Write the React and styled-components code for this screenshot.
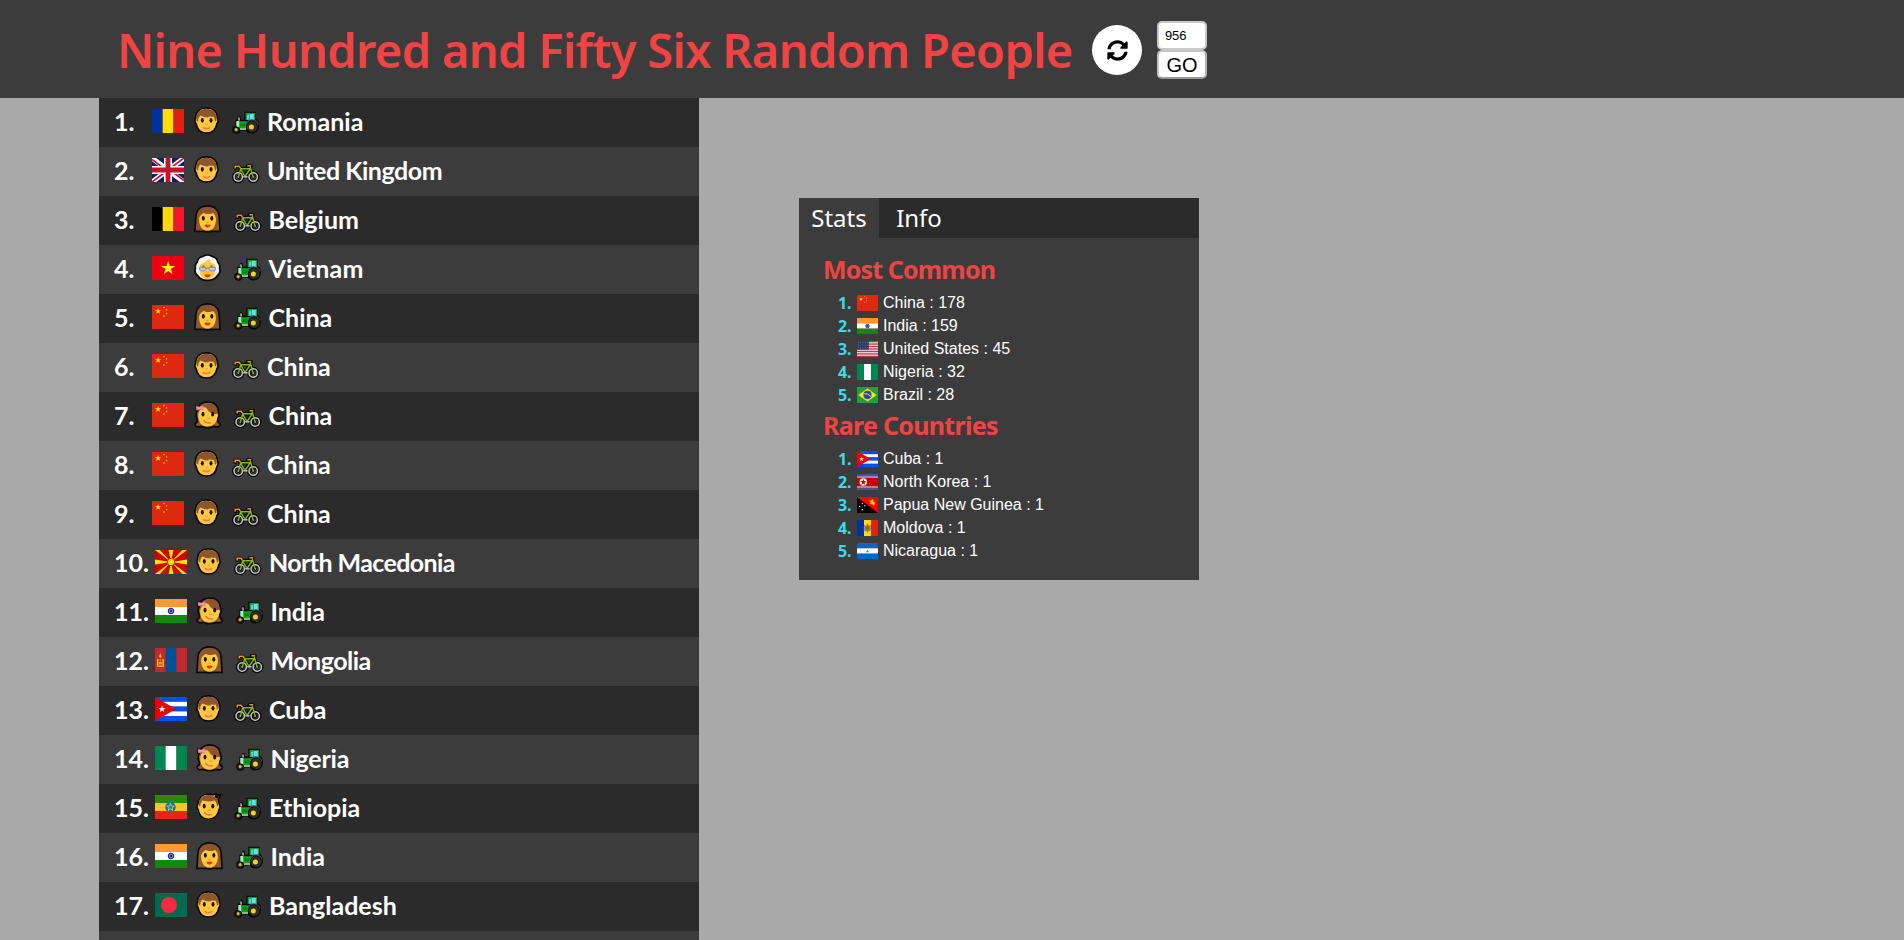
import React from "react";
import styled, { createGlobalStyle } from "styled-components";
import { FaSyncAlt } from "react-icons/fa";

const GlobalStyle = createGlobalStyle`
  * { box-sizing: border-box; }
  html, body { margin: 0; padding: 0; height: 100%; overflow: hidden; }
  body { background: #a9a9a9; font-family: "Liberation Sans", Arial, sans-serif; }
`;

const Page = styled.div`
  height: 940px;
  overflow: hidden;
`;

const Header = styled.header`
  display: flex;
  align-items: center;
  height: 98px;
  padding: 2px 0 0 117px;
  background: #3c3c3c;
`;

const Title = styled.h1`
  width: 975px;
  margin: 0;
  color: #f04444;
  font: 600 47px/60px "Noto Sans", sans-serif;
  letter-spacing: -0.68px;
  white-space: nowrap;
`;

const RefreshButton = styled.button`
  display: flex;
  align-items: center;
  justify-content: center;
  width: 50px;
  height: 50px;
  padding: 0;
  border: 0;
  border-radius: 50%;
  background: #fff;
  color: #000;
  font-size: 21px;
`;

const CountForm = styled.form`
  display: flex;
  flex-direction: column;
  width: 50px;
  margin-left: 15px;
`;

const CountInput = styled.input`
  width: 50px;
  height: 29px;
  padding: 0 6px;
  border: 2px solid #c8c8c8;
  border-radius: 5px;
  background: #fff;
  color: #000;
  font: 13px "Liberation Sans", Arial, sans-serif;
  letter-spacing: -0.15px;
`;

const GoButton = styled.button`
  width: 50px;
  height: 29px;
  padding: 0;
  border: 2px solid #c4c4c4;
  border-bottom-color: #999;
  border-right-color: #b4b4b4;
  border-radius: 5px;
  background: #fff;
  color: #000;
  font: 20px/24px "Liberation Sans", Arial, sans-serif;
`;

const Main = styled.main`
  display: flex;
  align-items: flex-start;
  padding-left: 99px;
`;

const PeopleList = styled.ol`
  width: 600px;
  margin: 0;
  padding: 0;
  list-style: none;
`;

const PersonRow = styled.li`
  display: flex;
  align-items: flex-start;
  height: 49px;
  padding-left: 15px;
  background: #3c3c3c;
  color: #fff;
  font: 700 25px/46px Lato, sans-serif;

  &:nth-child(odd) { background: #2b2b2b; }
`;

const RowNumber = styled.span`
  flex: none;
  width: ${(p) => (p.$wide ? "41px" : "38px")};
`;

const FlagSvg = styled.svg`
  display: block;
  flex: none;
  width: ${(p) => (p.$small ? "21px" : "32px")};
  height: ${(p) => (p.$small ? "16px" : "24px")};
`;

const RowFlag = styled.span`
  flex: none;
  width: ${(p) => (p.$wide ? "41px" : "42px")};
  padding-top: 11px;
`;

const FaceSvg = styled.svg`
  display: block;
  flex: none;
  width: 28px;
  height: 28px;
  margin: 9px ${(p) => (p.$broad ? "11.5px" : "10px")} 0 0;
`;

const VehicleSvg = styled.svg`
  display: block;
  flex: none;
  width: 28px;
  height: 28px;
  margin: 9px 7px 0 0;
`;

const CountryName = styled.span`
  margin-left: ${(p) => p.$nudge || 0}px;
  letter-spacing: ${(p) => p.$tracking || 0}px;
  white-space: nowrap;
`;

const StatsPanel = styled.section`
  width: 400px;
  height: 382px;
  margin: 100px 0 0 100px;
  background: #3c3c3c;
`;

const TabBar = styled.nav`
  display: flex;
  height: 40px;
  background: #2b2b2b;
`;

const Tab = styled.button`
  width: 80px;
  height: 40px;
  padding: 0;
  border: 0;
  background: ${(p) => (p.$active ? "#3c3c3c" : "transparent")};
  color: #fff;
  font: 400 24px/40px "Noto Sans", sans-serif;
`;

const PanelBody = styled.div`
  padding: 13px 25px 0 24px;
`;

const SectionTitle = styled.h2`
  margin: 0;
  height: 41px;
  color: #f04444;
  font: 700 25px/36px "Noto Sans", sans-serif;
  letter-spacing: ${(p) => p.$tracking}px;
`;

const StatList = styled.ol`
  margin: 0;
  padding: 0 0 0 15px;
  list-style: none;
`;

const StatItem = styled.li`
  display: flex;
  align-items: flex-start;
  height: 23px;
  padding-top: 3px;
  color: #fff;
  font-size: 16px;
  line-height: 16px;
`;

const StatNumber = styled.span`
  width: 19px;
  color: #3ddbe8;
  font: 700 16px/16px "Noto Sans", sans-serif;
  letter-spacing: -0.2px;
`;

const StatText = styled.span`
  margin-left: 5px;
`;

const starPoints = (cx, cy, r, turn = 0) =>
  Array.from({ length: 10 }, (_, i) => {
    const a = ((i * 36 - 90 + turn) * Math.PI) / 180;
    const d = i % 2 ? r * 0.382 : r;
    return `${(cx + d * Math.cos(a)).toFixed(2)},${(cy + d * Math.sin(a)).toFixed(2)}`;
  }).join(" ");

const Star = ({ x, y, r, fill, turn }) => <polygon points={starPoints(x, y, r, turn)} fill={fill} />;

const Vertical = ({ colors }) =>
  colors.map((c, i) => <rect key={i} x={(i * 32) / 3} width={32 / 3 + (i < 2 ? 0.2 : 0)} height="24" fill={c} />);

const Horizontal = ({ colors }) =>
  colors.map((c, i) => (
    <rect key={i} y={(i * 24) / colors.length} width="32" height={24 / colors.length} fill={c} />
  ));

const flagArt = {
  Romania: <Vertical colors={["#00319c", "#ffde00", "#de2110"]} />,
  Belgium: <Vertical colors={["#000", "#ffd90c", "#f31830"]} />,
  Nigeria: <Vertical colors={["#008751", "#fff", "#008751"]} />,
  "United Kingdom": (
    <>
      <rect width="32" height="24" fill="#012169" />
      <path d="M0 0L32 24M32 0L0 24" stroke="#fff" strokeWidth="5" />
      <path d="M0 1.5L12 10.5M20 13.5L32 22.5M32 0L20 9M12 15L0 24" stroke="#c8102e" strokeWidth="1.6" />
      <path d="M16 0V24M0 12H32" stroke="#fff" strokeWidth="8" />
      <path d="M16 0V24M0 12H32" stroke="#c8102e" strokeWidth="4.8" />
    </>
  ),
  Vietnam: (
    <>
      <rect width="32" height="24" fill="#ec0015" />
      <Star x={16.2} y={12.2} r={7.4} fill="#ffff00" />
    </>
  ),
  China: (
    <>
      <rect width="32" height="24" fill="#de2910" />
      <Star x={6.1} y={6.2} r={3.3} fill="#ffde00" />
      <Star x={11.9} y={2.6} r={1.2} fill="#ffde00" turn={20} />
      <Star x={14.6} y={4.9} r={1.2} fill="#ffde00" turn={40} />
      <Star x={14.6} y={8.6} r={1.2} fill="#ffde00" />
      <Star x={11.9} y={11} r={1.2} fill="#ffde00" turn={20} />
    </>
  ),
  "North Macedonia": (
    <>
      <rect width="32" height="24" fill="#d20000" />
      <path
        d="M0 0H4.8L16 12L27.2 0H32L16 12L32 24H27.2L16 12L4.8 24H0L16 12ZM13.6 0H18.4L16 12ZM13.6 24H18.4L16 12ZM0 9.6V14.4L16 12ZM32 9.6V14.4L16 12Z"
        fill="#ffe600"
      />
      <circle cx="16" cy="12" r="3.7" fill="#ffe600" stroke="#d20000" strokeWidth="0.8" />
    </>
  ),
  India: (
    <>
      <Horizontal colors={["#ff9933", "#fff", "#128807"]} />
      <circle cx="16" cy="12" r="2.8" fill="#8787c8" stroke="#000088" strokeWidth="0.9" />
      <circle cx="16" cy="12" r="1.1" fill="#000088" />
    </>
  ),
  Mongolia: (
    <>
      <Vertical colors={["#c4272f", "#015197", "#c4272f"]} />
      <path
        d="M5.3 5.2L6.7 8.5L5.3 10L3.9 8.5ZM2 11H3.4V19H2ZM7.4 11H8.8V19H7.4ZM4 11.4H6.8L5.4 12.8ZM4 17.3H6.8V19H4Z"
        fill="#f9cf02"
      />
      <circle cx="5.4" cy="15" r="1.5" fill="#f9a502" />
    </>
  ),
  Cuba: (
    <>
      <Horizontal colors={["#0050f0", "#fff", "#0050f0", "#fff", "#0050f0"]} />
      <path d="M0 0L20.8 12L0 24Z" fill="#ed0000" />
      <Star x={7} y={12.2} r={3.7} fill="#fff" />
    </>
  ),
  Ethiopia: (
    <>
      <Horizontal colors={["#2c8a0a", "#ffc621", "#ef2118"]} />
      <circle cx="15.5" cy="12.3" r="5.2" fill="#1a6ea8" />
      <polygon points={starPoints(15.5, 12.3, 4)} fill="none" stroke="#e8cb30" strokeWidth="0.9" />
    </>
  ),
  Bangladesh: (
    <>
      <rect width="32" height="24" fill="#006a4e" />
      <circle cx="14" cy="12" r="8" fill="#f42a41" />
    </>
  ),
  "United States": (
    <>
      <rect width="32" height="24" fill="#e9dcdf" />
      {Array.from({ length: 7 }, (_, i) => (
        <rect key={i} y={i * 3.69} width="32" height="1.85" fill="#bd3d44" />
      ))}
      <rect width="18" height="12.9" fill="#2d3d68" />
      {Array.from({ length: 15 }, (_, i) => (
        <circle key={i} cx={2 + (i % 5) * 3.5} cy={2.2 + Math.floor(i / 5) * 4} r="0.7" fill="#8790aa" />
      ))}
    </>
  ),
  Brazil: (
    <>
      <rect width="32" height="24" fill="#229e45" />
      <path d="M16 2.2L30 12L16 21.8L2 12Z" fill="#f8e509" />
      <circle cx="16" cy="12" r="6.2" fill="#2b49a3" />
      <path d="M10.5 10Q17 9 21.5 14.5" fill="none" stroke="#e8f0e8" strokeWidth="1.2" />
    </>
  ),
  "North Korea": (
    <>
      <rect width="32" height="24" fill="#3e5698" />
      <rect y="4" width="32" height="16" fill="#fff" />
      <rect y="5.2" width="32" height="13.6" fill="#c60000" />
      <circle cx="9.6" cy="12" r="5.6" fill="#fff" />
      <Star x={9.6} y={12.2} r={5.2} fill="#c60000" />
    </>
  ),
  "Papua New Guinea": (
    <>
      <rect width="32" height="24" fill="#000" />
      <path d="M0 0H32V24Z" fill="#ff0000" />
      <path d="M17 5L21 6L23 3L26 5L24 6.5L28 9L26 13L22 10.5L19 11L21 8Z" fill="#fc0" />
      <Star x={8.2} y={10} r={1.7} fill="#fff" />
      <Star x={4} y={14} r={1.7} fill="#fff" />
      <Star x={11.8} y={13} r={1.7} fill="#fff" />
      <Star x={8.2} y={19} r={1.9} fill="#fff" />
    </>
  ),
  Moldova: (
    <>
      <Vertical colors={["#00319c", "#ffde00", "#de2110"]} />
      <path d="M11 7L14 9L15 5.5H17L18 9L21 7L20.5 17L18 16.5L16 19L14 16.5L11.5 17Z" fill="#a77b3b" />
      <path d="M13.8 9H18.2V12H13.8Z" fill="#dc4405" />
      <path d="M13.8 12H18.2L16 16Z" fill="#3c6cb4" />
      <path d="M9 11L11 13L10 16M23 11L21 13L22 16" fill="none" stroke="#3a8d3a" />
    </>
  ),
  Nicaragua: (
    <>
      <Horizontal colors={["#0067c6", "#fff", "#0067c6"]} />
      <path d="M16 9.8L18.4 13.8H13.6Z" fill="#3fae8d" />
    </>
  ),
};

const Flag = ({ country, small }) => (
  <FlagSvg viewBox="0 0 32 24" preserveAspectRatio="none" $small={small} aria-label={country}>
    {flagArt[country]}
  </FlagSvg>
);

const SKIN = "#ffc83d";
const HAIR = "#8e562e";
const INK = "#0a0a0a";

const Eyes = ({ x1 = 8.3, x2 = 17, y = 13.3 }) => (
  <>
    <ellipse cx={x1} cy={y} rx="1.5" ry="2.4" fill="#1c1008" />
    <ellipse cx={x2} cy={y} rx="1.5" ry="2.4" fill="#1c1008" />
  </>
);

const faceArt = {
  man: (
    <>
      <path
        d="M12.5 .9C5.8 .9 1.8 5 1.6 11C.6 12.2 .7 15.2 2 16.4C3 22.5 7 26.2 12.5 26.2S22 22.5 23 16.4C24.3 15.2 24.4 12.2 23.4 11C23.2 5 19.2 .9 12.5 .9Z"
        fill={SKIN}
        stroke={INK}
        strokeWidth="1.7"
      />
      <path
        d="M12.5 1.8C6.4 1.8 2.4 5.3 2.4 10.6L2.6 14L4.2 14.4C4.2 11.5 5 9.6 6.6 8.6C9.5 10.3 12.6 10.9 15.6 10L14.2 8.8C17 10.2 18.6 9.8 19.4 9.4C20.3 10.5 20.8 12.2 20.9 14.4L22.4 14L22.6 10.6C22.6 5.3 18.6 1.8 12.5 1.8Z"
        fill={HAIR}
      />
      <Eyes />
      <path d="M11.3 16.8Q12.6 18.4 14 16.8" fill="#f09a2c" stroke="#f09a2c" strokeWidth=".8" />
      <path d="M9.4 20.8Q12.5 22.4 15.6 20.8" fill="none" stroke="#f07c50" strokeWidth="1.8" strokeLinecap="round" />
    </>
  ),
  woman: (
    <>
      <path
        d="M13.5 .9C5.8 .9 2 6 1.8 12.5L.9 26.4H9L13.5 26.8L18 26.4H26.1L25.2 12.5C25 6 21.2 .9 13.5 .9Z"
        fill={HAIR}
        stroke={INK}
        strokeWidth="1.7"
      />
      <path
        d="M9.5 7.8C8 9.6 5.2 10.3 5.1 14.5C5.1 21.5 8.5 25.6 13.5 25.6S21.9 21.5 21.9 14.5C21.9 11.5 20.6 9.5 19.2 8.1C16.5 9.2 12 9.7 9.5 7.8Z"
        fill={SKIN}
      />
      <Eyes x1={9.3} x2={17.8} y={13.3} />
      <path d="M12.2 17Q13.5 18.4 14.8 17" stroke="#f09a2c" fill="#f09a2c" />
      <path d="M10.2 20Q12.4 19 13.5 19.8Q14.6 19 16.8 20Q15.8 22.8 13.5 22.8T10.2 20Z" fill="#e6391a" />
    </>
  ),
  elder: (
    <>
      <path
        d="M13.5 1C10.5 1 9 2.6 7.5 3C4.8 3.6 3.6 5.8 3.3 8C1.4 9.5 1 12 1.4 14.2C.6 17 1.4 20.4 4 22C5.8 25 9.5 26.4 13.5 26.4S21.2 25 23 22C25.6 20.4 26.4 17 25.6 14.2C26 12 25.6 9.5 23.7 8C23.4 5.8 22.2 3.6 19.5 3C18 2.6 16.5 1 13.5 1Z"
        fill="#f3f3f3"
        stroke={INK}
        strokeWidth="1.7"
      />
      <path
        d="M15.5 5.5C12 5.8 10.6 9.4 6.8 10C5.8 11.5 5.4 13 5.4 15C5.4 21.2 9 25 13.5 25S21.6 21.2 21.6 15C21.6 12.8 21.2 11.4 20.2 10C17.5 9.5 16 8 15.5 5.5Z"
        fill={SKIN}
      />
      <path d="M8 12.6Q9.5 10.6 11 12.6ZM16 12.6Q17.5 10.6 19 12.6Z" fill="#3a2410" />
      <path
        d="M5.6 13.4H11.9V15.2Q11.4 17 8.8 17T5.6 15.2ZM15.1 13.4H21.4V15.2Q20.9 17 18.2 17T15.1 15.2ZM11.9 14.2H15.1"
        fill="#a5d5ef"
        stroke="#8a73c7"
        strokeWidth=".9"
      />
      <path d="M12.3 18Q13.5 19 14.7 18" fill="none" stroke="#f09a2c" />
      <path d="M10.2 20.8Q12.4 19.8 13.5 20.5Q14.6 19.8 16.8 20.8Q15.8 23.4 13.5 23.4T10.2 20.8Z" fill="#e6391a" />
    </>
  ),
  girl: (
    <>
      <path
        d="M14 .9C9.5 .9 6.4 2.8 4.6 5.5L1.8 5.2V8.8L3.2 9.5C1.6 12.5 1.8 15 3 17.2C3.8 19.6 3.6 21.6 1 22.4C.8 25.5 3.4 26.5 6.8 25.4C11 26.9 16.5 26.8 20.4 25.4C23.8 26.5 26.4 25.5 26.1 22.4C23.4 21.6 23.5 19.4 24 17C25.8 14.8 25.4 12.6 24.4 10.5C24 4.5 20 .9 14 .9Z"
        fill={HAIR}
        stroke={INK}
        strokeWidth="1.7"
      />
      <path
        d="M9.8 6.2C6 8 4 11 4.2 14.8C4.2 21.5 8 25.6 13.5 25.6S22.6 21.8 23.2 16.6C24.4 15.4 24.2 13.2 22.8 12.8C18.5 13.7 14.5 11.5 12.8 7.6C12 6.6 11 6 9.8 6.2Z"
        fill={SKIN}
      />
      <path d="M2 5.2L5.2 6L9.2 4.8V9L5.4 8.2L2.4 9Z" fill="#f597b8" stroke="#e06a9a" strokeWidth=".5" />
      <Eyes x1={9} x2={18.7} y={13.2} />
      <path d="M13.2 17Q15 18.2 16 16.9" stroke="#f09a2c" strokeWidth="1.3" fill="none" />
      <path d="M10 19.6Q11.8 22.6 16.2 21.8" stroke="#f07c50" strokeWidth="1.8" strokeLinecap="round" fill="none" />
    </>
  ),
  boy: (
    <>
      <path
        d="M12.4 1.2C6 1.2 2.4 5.4 2 11C.6 12.4 .8 15.4 2.2 16.4C3 22.5 7 26.2 12.4 26.2S22 22.5 23 16.4C24.3 15.2 24.2 12.2 23 11C23 9.4 22.6 7.8 22 6.6L24.8 1.4L19.8 2.2L20.4 .4L17 1.9C15.5 1.3 14 1.2 12.4 1.2Z"
        fill={SKIN}
        stroke={INK}
        strokeWidth="1.5"
      />
      <path
        d="M12.5 2C6.6 2 3 5.6 2.8 10.8L3 13.4L4.4 13C4.6 10.8 5 9 6.4 7.6C10.5 8.7 15 8.8 18.6 7.4C20.4 9 20.8 11 21 13.4L22.2 12.6C22.2 9.5 21.8 7.4 20.8 5.8L22 3.4L18.6 4.2C16.8 2.6 15 2 12.5 2Z"
        fill={HAIR}
      />
      <path d="M18.4 4L19.4 1.8L24 1.8L21.4 5.8Z" fill="#17100a" />
      <Eyes x1={8.2} x2={16.8} y={13.2} />
      <path d="M11.6 16.9Q13.3 18 14.2 16.8" stroke="#f09a2c" strokeWidth="1.2" fill="none" />
      <path d="M8.8 19.8Q11 22.7 15 21.6" stroke="#f07c50" strokeWidth="1.8" strokeLinecap="round" fill="none" />
    </>
  ),
};

const vehicleArt = {
  tractor: (
    <>
      <path
        d="M12.3 4.8H23.6V11.4C26.2 13 27.2 15.5 27 18.6C26.6 23.6 23.6 26.4 20.2 26.6C17 26.6 14.8 25 13.8 23.4H8.6C8.2 25.6 6.4 26.8 4.4 26.8C1.8 26.8 .2 25 .2 22.6C.2 20.8 1.2 19.6 3.4 18.6V12.4H5.8V9.4L8.4 8.8L9.2 12.4H12.3Z"
        fill={INK}
      />
      <path d="M13.6 5.9H23V13H13.6Z" fill="#16a021" />
      <path d="M15 8L17.4 7.2V12.6H15Z" fill="#4ed4ef" />
      <path d="M18 7H21.8V13H18Z" fill="#67dcf5" />
      <path d="M4.4 14.2H15L23 13.6V20.5H15L14 22.4H8.6L4.4 19Z" fill="#16a021" />
      <path d="M4.4 14H7.2V20H4.4Z" fill="#b9e6c0" />
      <path d="M8.4 17H13.5M8.4 18.7H13" stroke="#086a16" strokeWidth=".9" />
      <path d="M6.4 10.2H7.4L8 13.4H6.4Z" fill="#d0d0d0" />
      <path d="M8 21.4H14V22.7H8Z" fill="#cfd3d3" />
      <circle cx="20.2" cy="19.7" r="5.9" fill="#2c2c2c" stroke="#050505" strokeWidth=".9" />
      <path d="M14.4 15.6Q17 12.6 20.8 13Q25 13.4 26.2 17.5" stroke="#444" strokeWidth="1.2" fill="none" />
      <circle cx="19.4" cy="20" r="2.5" fill="#f9d21c" />
      <circle cx="4.2" cy="22.8" r="3.1" fill="#333" stroke="#050505" strokeWidth=".8" />
      <circle cx="4.2" cy="22.7" r="1.4" fill="#e8c81a" />
    </>
  ),
  bike: (
    <>
      <g fill="none" stroke={INK} strokeLinecap="round" strokeLinejoin="round">
        <circle cx="6.2" cy="21" r="4.5" strokeWidth="3.5" />
        <circle cx="21.2" cy="21" r="4.5" strokeWidth="3.5" />
        <path d="M6.5 21L8.4 12.6H18.2L12.6 20.5L8.4 12.6M18.2 10L21 20.6M3.4 12.5V10.4H7.2L8.2 12.8M15.2 10H19.2" strokeWidth="3.5" />
      </g>
      <g fill="none" strokeLinejoin="round">
        <circle cx="6.2" cy="21" r="4.2" stroke="#c6c6c6" strokeWidth="1.5" />
        <circle cx="21.2" cy="21" r="4.2" stroke="#c6c6c6" strokeWidth="1.5" />
        <path d="M6.5 21L8.6 12.8H18.2L13 20.5L8.6 12.8M18.2 10.6L21 20.6" stroke="#86b916" strokeWidth="1.4" />
        <path d="M3.2 12.4V10.2H7.2L8.2 12.2M15.4 9.8H19.2" stroke="#e8921c" strokeWidth="1.6" />
        <path d="M11.2 20.8H15.6" stroke="#b8b8b8" strokeWidth="1.6" />
        <circle cx="6.2" cy="21" r=".9" fill="#86b916" />
        <circle cx="21.2" cy="21" r=".9" fill="#86b916" />
      </g>
    </>
  ),
};

const Face = ({ kind }) => (
  <FaceSvg viewBox="0 0 28 28" $broad={kind === "woman" || kind === "elder" || kind === "girl"}>
    {faceArt[kind]}
  </FaceSvg>
);

const Vehicle = ({ kind }) => <VehicleSvg viewBox="0 0 28 28">{vehicleArt[kind]}</VehicleSvg>;

const nameFit = { "United Kingdom": -0.45, "North Macedonia": -0.6, Vietnam: 0.15, Nigeria: -0.2, Mongolia: -0.5 };

const people = [
  ["Romania", "man", "tractor"],
  ["United Kingdom", "man", "bike"],
  ["Belgium", "woman", "bike"],
  ["Vietnam", "elder", "tractor"],
  ["China", "woman", "tractor"],
  ["China", "man", "bike"],
  ["China", "girl", "bike"],
  ["China", "man", "bike"],
  ["China", "man", "bike"],
  ["North Macedonia", "man", "bike"],
  ["India", "girl", "tractor"],
  ["Mongolia", "woman", "bike"],
  ["Cuba", "man", "bike"],
  ["Nigeria", "girl", "tractor"],
  ["Ethiopia", "boy", "tractor"],
  ["India", "woman", "tractor"],
  ["Bangladesh", "man", "tractor"],
  ["", "man", ""],
];

const common = [["China", 178], ["India", 159], ["United States", 45], ["Nigeria", 32], ["Brazil", 28]];
const rare = [["Cuba", 1], ["North Korea", 1], ["Papua New Guinea", 1], ["Moldova", 1], ["Nicaragua", 1]];

const Person = ({ index, country, face, vehicle }) => {
  const wide = index > 9;
  return (
    <PersonRow>
      <RowNumber $wide={wide}>{country && `${index}.`}</RowNumber>
      <RowFlag $wide={wide}>{country && <Flag country={country} />}</RowFlag>
      <Face kind={face} />
      {vehicle && <Vehicle kind={vehicle} />}
      <CountryName $tracking={nameFit[country]}>{country}</CountryName>
    </PersonRow>
  );
};

const Stats = ({ rows }) => (
  <StatList>
    {rows.map(([country, count], i) => (
      <StatItem key={country}>
        <StatNumber>{i + 1}.</StatNumber>
        <Flag country={country} small />
        <StatText>{`${country} : ${count}`}</StatText>
      </StatItem>
    ))}
  </StatList>
);

export default function App() {
  return (
    <Page>
      <GlobalStyle />
      <Header>
        <Title>Nine Hundred and Fifty Six Random People</Title>
        <RefreshButton aria-label="Refresh">
          <FaSyncAlt />
        </RefreshButton>
        <CountForm>
          <CountInput defaultValue="956" />
          <GoButton type="button">GO</GoButton>
        </CountForm>
      </Header>
      <Main>
        <PeopleList>
          {people.map(([country, face, vehicle], i) => (
            <Person key={i} index={i + 1} country={country} face={face} vehicle={vehicle} />
          ))}
        </PeopleList>
        <StatsPanel>
          <TabBar>
            <Tab $active>Stats</Tab>
            <Tab>Info</Tab>
          </TabBar>
          <PanelBody>
            <SectionTitle $tracking={-0.85}>Most Common</SectionTitle>
            <Stats rows={common} />
            <SectionTitle $tracking={-0.7}>Rare Countries</SectionTitle>
            <Stats rows={rare} />
          </PanelBody>
        </StatsPanel>
      </Main>
    </Page>
  );
}
